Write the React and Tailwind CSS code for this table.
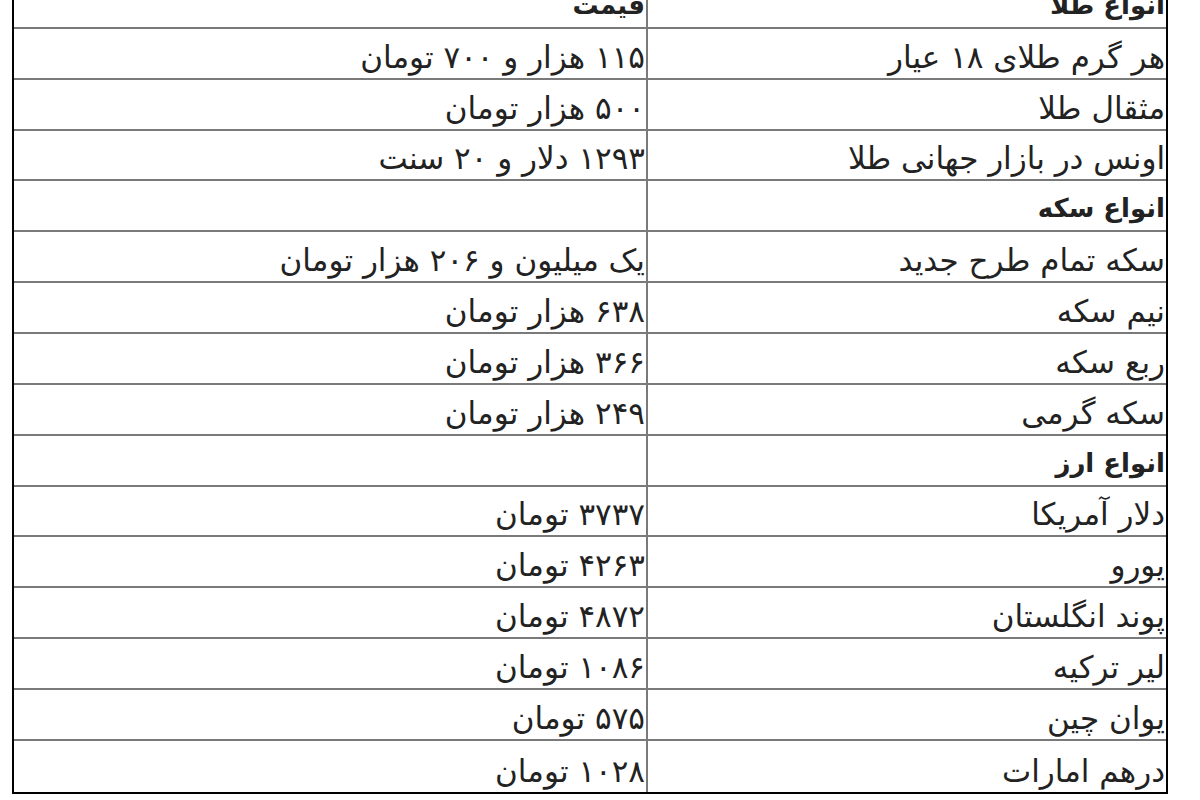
import React from "react";

const rows = [
  { name: "انواع طلا", price: "قیمت", bold: true },
  { name: "هر گرم طلای ۱۸ عیار", price: "۱۱۵ هزار و ۷۰۰ تومان" },
  { name: "مثقال طلا", price: "۵۰۰ هزار تومان" },
  { name: "اونس در بازار جهانی طلا", price: "۱۲۹۳ دلار و ۲۰ سنت" },
  { name: "انواع سکه", price: "", bold: true },
  { name: "سکه تمام طرح جدید", price: "یک میلیون و ۲۰۶ هزار تومان" },
  { name: "نیم سکه", price: "۶۳۸ هزار تومان" },
  { name: "ربع سکه", price: "۳۶۶ هزار تومان" },
  { name: "سکه گرمی", price: "۲۴۹ هزار تومان" },
  { name: "انواع ارز", price: "", bold: true },
  { name: "دلار آمریکا", price: "۳۷۳۷ تومان" },
  { name: "یورو", price: "۴۲۶۳ تومان" },
  { name: "پوند انگلستان", price: "۴۸۷۲ تومان" },
  { name: "لیر ترکیه", price: "۱۰۸۶ تومان" },
  { name: "یوان چین", price: "۵۷۵ تومان" },
  { name: "درهم امارات", price: "۱۰۲۸ تومان" },
];

const App = () => {
  return (
    <div className="w-[1200px] h-[800px] overflow-hidden bg-white">
      <div
        dir="rtl"
        className="ml-[12px] mt-[-22px] w-[1156px] border-x-2 border-b-2 border-black text-[#222] font-['DejaVu_Sans',sans-serif]"
      >
        {rows.map((row, i) => {
          const text = row.bold
            ? "text-[26px] font-bold pb-[9px]"
            : "text-[31px] pb-[5px]";
          return (
            <div
              key={i}
              className={
                "grid grid-cols-[520px_1fr] h-[50.87px] " +
                (i < rows.length - 1 ? "border-b-2 border-[#7a7a7a]" : "")
              }
            >
              <div
                className={
                  "flex items-end pr-[1px] leading-none border-l-2 border-[#7a7a7a] whitespace-nowrap " +
                  text
                }
              >
                {row.name}
              </div>
              <div
                className={
                  "flex items-end pr-[1px] leading-none whitespace-nowrap " + text
                }
              >
                {row.price}
              </div>
            </div>
          );
        })}
      </div>
    </div>
  );
};

export default App;
